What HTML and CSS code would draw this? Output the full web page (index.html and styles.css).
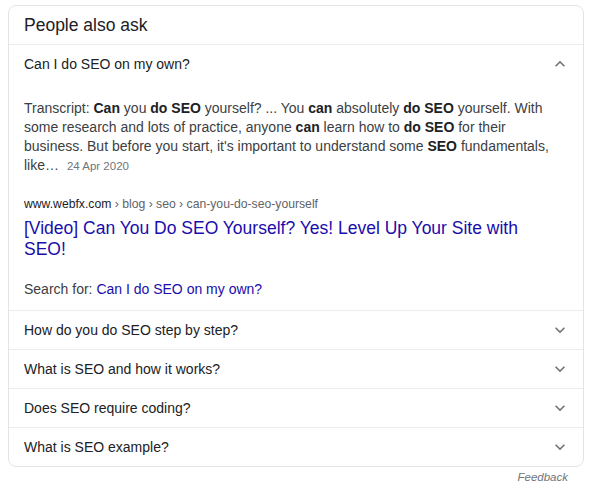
FILE: index.html
```html
<!DOCTYPE html>
<html lang="en">
<head>
<meta charset="utf-8">
<title>People also ask</title>
<link rel="stylesheet" href="styles.css">
</head>
<body>
<div class="card">
  <div class="head">People also ask</div>
  <div class="row open">
    <span>Can I do SEO on my own?</span>
    <svg class="chev" viewBox="0 0 24 24" width="20" height="20"><path d="M7.41 15.41L12 10.83l4.59 4.58L18 14l-6-6-6 6z"/></svg>
  </div>
  <div class="answer">
    <p class="snippet">Transcript: <b>Can</b> you <b>do SEO</b> yourself? ... You <b>can</b> absolutely <b>do SEO</b> yourself. With some research and lots of practice, anyone <b>can</b> learn how to <b>do SEO</b> for their business. But before you start, it's important to understand some <b>SEO</b> fundamentals, like&hellip; <span class="date">24 Apr 2020</span></p>
    <div class="cite"><span class="host">www.webfx.com</span> › blog › seo › can-you-do-seo-yourself</div>
    <a class="title" href="#">[Video] Can You Do SEO Yourself? Yes! Level Up Your Site with SEO!</a>
    <div class="search">Search for: <a href="#">Can I do SEO on my own?</a></div>
  </div>
  <div class="row">
    <span>How do you do SEO step by step?</span>
    <svg class="chev" viewBox="0 0 24 24" width="20" height="20"><path d="M16.59 8.59L12 13.17 7.41 8.59 6 10l6 6 6-6z"/></svg>
  </div>
  <div class="row">
    <span>What is SEO and how it works?</span>
    <svg class="chev" viewBox="0 0 24 24" width="20" height="20"><path d="M16.59 8.59L12 13.17 7.41 8.59 6 10l6 6 6-6z"/></svg>
  </div>
  <div class="row">
    <span>Does SEO require coding?</span>
    <svg class="chev" viewBox="0 0 24 24" width="20" height="20"><path d="M16.59 8.59L12 13.17 7.41 8.59 6 10l6 6 6-6z"/></svg>
  </div>
  <div class="row">
    <span>What is SEO example?</span>
    <svg class="chev" viewBox="0 0 24 24" width="20" height="20"><path d="M16.59 8.59L12 13.17 7.41 8.59 6 10l6 6 6-6z"/></svg>
  </div>
</div>
<div class="feedback">Feedback</div>
</body>
</html>
```
FILE: styles.css
```css
html, body {
  margin: 0;
  padding: 0;
  background: #fff;
}
body {
  padding: 5px 8px 0 8px;
  font-family: "Liberation Sans", Arial, sans-serif;
  color: #202124;
}
.card {
  width: 574px;
  border: 1px solid #e4e4e4;
  border-radius: 8px;
}
.head {
  height: 38px;
  display: flex;
  align-items: center;
  padding-left: 15px;
  font-size: 17.5px;
  color: #202124;
  border-bottom: 1px solid #ececec;
}
.row {
  height: 38px;
  display: flex;
  align-items: center;
  justify-content: space-between;
  padding: 0 13px 0 15px;
  font-size: 14px;
  color: #202124;
  border-top: 1px solid #ececec;
}
.row.open {
  border-top: none;
}
.chev {
  fill: #70757a;
  display: block;
}
.answer {
  padding: 16px 22px 11px 15px;
  display: flex;
  flex-direction: column;
}
.snippet {
  margin: 0;
  font-size: 14px;
  line-height: 19px;
  color: #3c4043;
}
.snippet b {
  color: #202124;
}
.date {
  font-size: 11.5px;
  color: #70757a;
  margin-left: 4px;
}
.cite {
  margin-top: 20px;
  font-size: 12.2px;
  line-height: 16px;
  color: #5f6368;
}
.host {
  color: #202124;
}
.title {
  margin-top: 6px;
  font-size: 17.5px;
  line-height: 21.3px;
  color: #1a0dab;
  text-decoration: none;
  padding-right: 40px;
}
.search {
  margin-top: 19px;
  font-size: 14px;
  line-height: 19px;
  color: #3c4043;
}
.search a {
  color: #1a0dab;
  text-decoration: none;
}
.feedback {
  width: 560px;
  text-align: right;
  font-size: 11.5px;
  font-style: italic;
  color: #70757a;
  margin-top: 4px;
}
```
